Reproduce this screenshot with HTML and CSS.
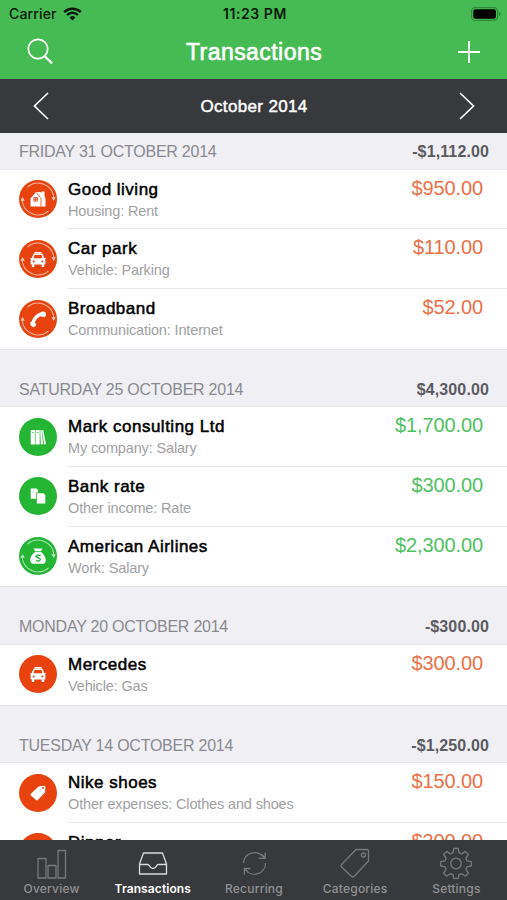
FILE: index.html
```html
<!DOCTYPE html>
<html lang="en">
<head>
<meta charset="utf-8">
<title>Transactions</title>
<link rel="stylesheet" href="styles.css">
</head>
<body>
<svg class="defs" aria-hidden="true">
  <symbol id="cycle" viewBox="0 0 38 38">
    <g fill="none" stroke="#fff" stroke-opacity=".6" stroke-width="1.1">
      <path d="M8.500 7A16 16 0 0 1 34.800 17.500"/>
      <path d="M29.500 31A16 16 0 0 1 3.200 20.500"/>
    </g>
    <g fill="#fff" fill-opacity=".7"><path d="M32.400 17.200h4.400l-2 3.800z"/><path d="M1.400 20.800h4.400l-2.300-3.800z"/></g>
  </symbol>
  <symbol id="house" viewBox="0 0 38 38">
    <path fill="#fff" d="M11.500 18.500l5.500-6.500h4.500l1 1V11.500h3V16l1 2.300V26.500h-15z"/>
    <path fill="none" stroke="#e8430f" stroke-width=".8" d="M17.300 12.500l4.700 6v8M14.800 17.500h3.700v3.600h-3.700zM16.600 17.500v3.600M14.800 19.300h3.700"/>
  </symbol>
  <symbol id="car" viewBox="0 0 38 38">
    <path fill="#fff" d="M15.500 12h7v1.500h-7zM14.500 13.700h9l1.700 4.400h1.500v1h-.9l.6 1v4.200h-1.200V27h-2.500v-2.500h-7.400V27h-2.500v-2.700h-1.200v-4.200l.6-1h-.9v-1h1.500z"/>
    <path fill="#e8430f" d="M15.500 15h7l1 3.300h-9z"/><circle cx="14.700" cy="21.500" r="1" fill="#e8430f"/><circle cx="23.300" cy="21.500" r="1" fill="#e8430f"/>
  </symbol>
  <symbol id="phone" viewBox="0 0 38 38">
    <path fill="none" stroke="#fff" stroke-width="3.300" d="M13.800 24.500C14 19 18.500 14.300 24 14"/>
    <path fill="#fff" stroke="#fff" stroke-width=".8" stroke-linejoin="round" d="M22 12.300q2.600-1 4.300.3.800 2.400-.5 4.200l-3.400-.5zM11.800 22.300l3.400-.5 1.600 3q-.3 1.800-2.500 2-2.200-.6-2.500-2.200z"/>
  </symbol>
  <symbol id="binders" viewBox="0 0 38 38">
    <path fill="#fff" d="M11.700 12h4.200v14.500h-4.200zM16.500 12h4.200v14.500h-4.200zM21.200 12.500l1.400-.4 1.500 14.200-2.300.2zM23 12.200l1.300-.3 2.700 14.300-2 .4z"/>
    <path fill="none" stroke="#25b534" stroke-width=".8" d="M13.200 14.500h1.400M18 14.500h1.400"/>
  </symbol>
  <symbol id="papers" viewBox="0 0 38 38">
    <path fill="#fff" d="M11.700 11.600h5.800l1.600 1.600v2.200h-2v6.400h-5.400zM17.800 16.200h6.600l1.900 1.900v8.500h-8.500z"/>
  </symbol>
  <symbol id="bag" viewBox="0 0 38 38">
    <path fill="#fff" d="M14.500 11.500h9l-1.700 2.700h-5.600zM16 15h6c3 2.300 4.800 5 4.800 8.200 0 2.200-1 3.500-3 3.500h-9.600c-2 0-3-1.300-3-3.500 0-3.200 1.800-5.900 4.800-8.200z"/>
    <path fill="none" stroke="#25b534" stroke-width="1.300" d="M21.700 18.700l-3.200-.8-1.600 1.500 4.500 2.700-1.400 2-3-.4"/>
  </symbol>
  <symbol id="tag" viewBox="0 0 38 38">
    <path fill="#fff" d="M19.500 12.500l5-.8q1.600 0 1.900 1.300l-.4 5.500-7.500 7.700q-.8.600-1.600-.1l-5.100-4.800q-.6-.8.100-1.600z"/><circle cx="24" cy="14" r="1" fill="#e8430f"/>
  </symbol>
</svg>
<div class="app">
  <header class="top">
    <div class="status">
      <div class="carrier"><span>Carrier</span>
        <svg width="19" height="14" viewBox="0 0 19 14"><path d="M1.200 5.100a11.800 11.800 0 0 1 16.600 0M4 8a7.800 7.800 0 0 1 11 0" fill="none" stroke="#061a08" stroke-width="2.400"/><path d="M9.500 13.600l-2.900-3.100a4.200 4.200 0 0 1 5.800 0z" fill="#061a08"/></svg>
      </div>
      <div class="clock">11:23 PM</div>
      <svg class="battery" width="30" height="14" viewBox="0 0 30 14"><rect x=".6" y=".6" width="26" height="12.800" rx="3.600" fill="none" stroke="#2c8a39" stroke-width="1.200"/><rect x="2.300" y="2.300" width="22.600" height="9.400" rx="2" fill="#000"/><path d="M28 4.800q1.700.6 1.700 2.200T28 9.200z" fill="#2c8a39"/></svg>
    </div>
    <div class="nav">
      <svg width="28" height="28" viewBox="0 0 28 28" fill="none" stroke="#fff"><circle cx="12" cy="11" r="9.700" stroke-width="1.700"/><path d="M18.700 18.200l7.400 7.200" stroke-width="2.300"/></svg>
      <h1>Transactions</h1>
      <svg width="22" height="22" viewBox="0 0 22 22" stroke="#fff" stroke-width="1.800"><path d="M0 11h22M11 0v22"/></svg>
    </div>
  </header>
  <div class="month">
    <svg width="16" height="28" viewBox="0 0 16 28" fill="none" stroke="#fff" stroke-width="1.700"><path d="M15 1L1.500 14 15 27"/></svg>
    <h2>October 2014</h2>
    <svg width="16" height="28" viewBox="0 0 16 28" fill="none" stroke="#fff" stroke-width="1.700"><path d="M1 1l13.500 13L1 27"/></svg>
  </div>
  <main class="list">
    <section>
      <div class="day first"><span>FRIDAY 31 OCTOBER 2014</span><b>-$1,112.00</b></div>
      <div class="row expense"><svg class="badge"><use href="#cycle"/><use href="#house"/></svg><div class="entry"><div class="text"><h3>Good living</h3><p>Housing: Rent</p></div><span class="amount">$950.00</span></div></div>
      <div class="row expense"><svg class="badge"><use href="#cycle"/><use href="#car"/></svg><div class="entry"><div class="text"><h3>Car park</h3><p>Vehicle: Parking</p></div><span class="amount">$110.00</span></div></div>
      <div class="row expense"><svg class="badge"><use href="#cycle"/><use href="#phone"/></svg><div class="entry"><div class="text"><h3>Broadband</h3><p>Communication: Internet</p></div><span class="amount">$52.00</span></div></div>
    </section>
    <section>
      <div class="day"><span>SATURDAY 25 OCTOBER 2014</span><b>$4,300.00</b></div>
      <div class="row income"><svg class="badge"><use href="#binders"/></svg><div class="entry"><div class="text"><h3>Mark consulting Ltd</h3><p>My company: Salary</p></div><span class="amount">$1,700.00</span></div></div>
      <div class="row income"><svg class="badge"><use href="#papers"/></svg><div class="entry"><div class="text"><h3>Bank rate</h3><p>Other income: Rate</p></div><span class="amount">$300.00</span></div></div>
      <div class="row income"><svg class="badge"><use href="#cycle"/><use href="#bag"/></svg><div class="entry"><div class="text"><h3>American Airlines</h3><p>Work: Salary</p></div><span class="amount">$2,300.00</span></div></div>
    </section>
    <section>
      <div class="day"><span>MONDAY 20 OCTOBER 2014</span><b>-$300.00</b></div>
      <div class="row expense"><svg class="badge"><use href="#car"/></svg><div class="entry"><div class="text"><h3>Mercedes</h3><p>Vehicle: Gas</p></div><span class="amount">$300.00</span></div></div>
    </section>
    <section>
      <div class="day"><span>TUESDAY 14 OCTOBER 2014</span><b>-$1,250.00</b></div>
      <div class="row expense"><svg class="badge"><use href="#tag"/></svg><div class="entry"><div class="text"><h3>Nike shoes</h3><p>Other expenses: Clothes and shoes</p></div><span class="amount">$150.00</span></div></div>
      <div class="row expense"><svg class="badge"></svg><div class="entry"><div class="text"><h3>Dinner</h3></div><span class="amount">$300.00</span></div></div>
    </section>
  </main>
  <nav class="tabs">
    <div class="tab"><svg viewBox="0 0 32 32"><path d="M2 11.500h8V31H2zM12 18.500h8V31h-8zM22 3.500h7.500V31H22z"/></svg><span>Overview</span></div>
    <div class="tab active"><svg viewBox="0 0 32 32"><path d="M6.500 6h19l4 11v10h-27V17zM2.500 17.500h8.500c1.500 0 1.500 4 5 4s3.500-4 5-4h8.500"/></svg><span>Transactions</span></div>
    <div class="tab"><svg viewBox="0 0 32 32"><path d="M5.500 16A11 11 0 0 1 25.500 10.500M20.500 11.300h6.700V5.500M27.500 16A11 11 0 0 1 7.500 22.500M12.500 21.500H6.300V27.500M6.500 21.700l4 4M27 11l-3-3.500"/></svg><span>Recurring</span></div>
    <div class="tab"><svg viewBox="0 0 32 32"><path d="M17 2.500h11q1.500 0 1.500 1.500v10L15 29.500q-1.200 1-2.400 0L2.400 19.800q-.8-1 0-2z"/><circle cx="24.500" cy="8" r="2"/></svg><span>Categories</span></div>
    <div class="tab"><svg viewBox="0 0 32 32"><path d="M13.800 1.500h4.400l.7 4.200 2.900 1.200 3.500-2.500 3.100 3.100-2.500 3.500 1.200 2.900 4.200.7v4.400l-4.200.7-1.200 2.900 2.500 3.500-3.100 3.100-3.500-2.500-2.900 1.200-.7 3.600h-4.400l-.7-3.600-2.900-1.200-3.500 2.500-3.100-3.100 2.500-3.500-1.200-2.900-4.200-.7v-4.400l4.200-.7L6.100 11 3.600 7.500l3.100-3.100 3.500 2.500 2.900-1.200z"/><circle cx="16" cy="16.500" r="5.300"/></svg><span>Settings</span></div>
  </nav>
</div>
</body>
</html>
```
FILE: styles.css
```css
* { box-sizing: border-box; margin: 0; padding: 0; }
body { font-family: "Liberation Sans", Arial, sans-serif; background: #fff; }
svg { display: block; flex: none; }
.defs { position: absolute; width: 0; height: 0; }
.app { width: 507px; height: 900px; display: flex; flex-direction: column; overflow: hidden; }
h1, h2, h3 { font-weight: 400; white-space: nowrap; }

.top { height: 79px; background: #46bb54; flex: none; }
.status { height: 27px; padding: 0 6px 0 9px; display: grid; grid-template-columns: 1fr auto 1fr; align-items: center; font-family: Inter, sans-serif; font-size: 14px; color: #061a08; }
.carrier { display: flex; align-items: center; gap: 6px; letter-spacing: .15px; font-weight: 500; }
.clock { font-weight: 600; font-size: 14px; letter-spacing: .55px; }
.battery { justify-self: end; }
.nav { height: 50px; padding: 0 27px 0 26px; display: grid; grid-template-columns: 1fr auto 1fr; align-items: center; color: #fff; }
.nav svg:last-child { justify-self: end; }
.nav h1 { font-size: 23px; letter-spacing: .45px; padding-left: 2px; -webkit-text-stroke: .6px #fff; }

.month { height: 54px; flex: none; background: #38393c; color: #fff; padding: 0 32px 0 33px; display: flex; align-items: center; justify-content: space-between; }
.month h2 { font-size: 17px; letter-spacing: .35px; -webkit-text-stroke: .45px #fff; padding-top: 2px; }

.list { flex: 1; min-height: 0; overflow: hidden; }
.day { height: 58.5px; padding: 21px 18px 0 19px; display: flex; justify-content: space-between; background: #efeff4; border-top: 1px solid #e3e4e7; border-bottom: 1px solid #e6e7e9; font-size: 16px; line-height: 38px; color: #8a8a8f; }
.day.first { height: 36.700px; padding-top: 0; border-top: 0; }
.day span { letter-spacing: -.24px; white-space: nowrap; }
.day b { color: #5b5b5f; letter-spacing: .12px; }
.row { height: 59.700px; padding-left: 18px; display: flex; gap: 12px; background: #fff; }
.badge { width: 38px; height: 38px; margin: 10.500px -.5px 0 .5px; border-radius: 50%; }
.expense .badge { background: #e8430f; }
.income .badge { background: #25b534; }
.entry { flex: 1; display: flex; justify-content: space-between; padding: 8px 24px 0 0; border-bottom: 1px solid #e8e8ea; }
.row:last-child .entry { border-bottom: 0; }
.text h3 { font-size: 17px; line-height: 23px; letter-spacing: .5px; color: #000; -webkit-text-stroke: .5px #000; }
.text p { font-size: 14.500px; line-height: 21px; letter-spacing: -.15px; color: #a1a1a3; white-space: nowrap; }
.amount { font-size: 20px; line-height: 20px; letter-spacing: -.1px; }
.expense .amount { color: #ec7048; }
.income .amount { color: #50c15f; }

.tabs { height: 60px; flex: none; background: #38393c; display: grid; grid-template-columns: repeat(5, 1fr); padding: 7px 0 0 1px; }
.tab { display: flex; flex-direction: column; align-items: center; color: #909194; font: 500 12px/16px Inter, sans-serif; letter-spacing: .2px; }
.tab svg { width: 32px; height: 32px; fill: none; stroke: #77787b; stroke-width: 1.300; stroke-linejoin: round; }
.tab span { margin-top: 2px; }
.tab.active { color: #fff; font-weight: 600; letter-spacing: .1px; }
.tab.active svg { stroke: #d9dadb; }
```
